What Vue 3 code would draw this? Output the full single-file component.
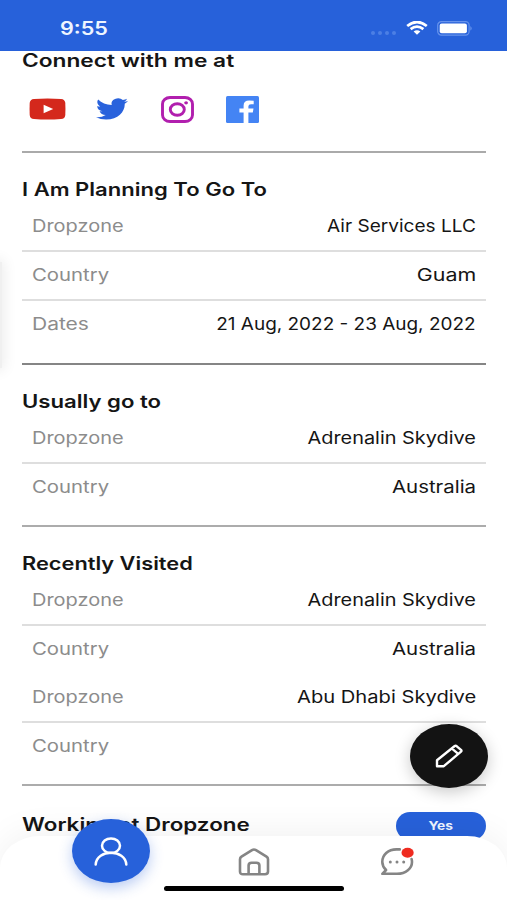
<script setup>
const trips = [
  {
    title: 'I Am Planning To Go To',
    stretch: 1.225,
    rows: [
      { label: 'Dropzone', value: 'Air Services LLC', stretch: 1.12 },
      { label: 'Country', value: 'Guam', stretch: 1.26 },
      { label: 'Dates', value: '21 Aug, 2022 - 23 Aug, 2022', stretch: 1.115 },
    ],
  },
  {
    title: 'Usually go to',
    stretch: 1.23,
    rows: [
      { label: 'Dropzone', value: 'Adrenalin Skydive', stretch: 1.17 },
      { label: 'Country', value: 'Australia', stretch: 1.2 },
    ],
  },
  {
    title: 'Recently Visited',
    stretch: 1.21,
    rows: [
      { label: 'Dropzone', value: 'Adrenalin Skydive', stretch: 1.17 },
      { label: 'Country', value: 'Australia', stretch: 1.2, plain: true },
      { label: 'Dropzone', value: 'Abu Dhabi Skydive', stretch: 1.185 },
      { label: 'Country', value: '', stretch: 1 },
    ],
  },
];

const labelStretch = { Dropzone: 1.175, Country: 1.195, Dates: 1.235 };

const scale = (x) => ({ transform: `scaleX(${x})` });
</script>

<template>
  <div class="screen">
    <header class="status-bar">
      <span class="time">9:55</span>
      <div class="status-icons">
        <span class="dots"><i v-for="n in 4" :key="n"></i></span>
        <svg class="wifi" viewBox="0 0 22 14" preserveAspectRatio="none">
          <path d="M1.2 5 Q11 -3 20.8 5" />
          <path d="M4.6 8.1 Q11 3 17.4 8.1" />
          <path class="wifi-tip" d="M7.6 10.6 Q11 8 14.4 10.6 L11 13.7 Z" />
        </svg>
        <svg class="battery" viewBox="0 0 36 15">
          <rect class="shell" x="0.7" y="0.7" width="31.4" height="13.4" rx="3.6" />
          <rect class="charge" x="2.7" y="2.5" width="27.2" height="9.8" rx="2" />
          <path class="nub" d="M33.5 5 Q35.6 7.4 33.5 9.8 Z" />
        </svg>
      </div>
    </header>

    <main class="content">
      <section class="connect">
        <h2><span class="stretch" :style="scale(1.262)">Connect with me at</span></h2>
        <div class="socials">
          <svg viewBox="0 0 37 34" class="youtube">
            <path fill="#d4281c" d="M5 6.9 Q18.5 5.9 32 6.9 Q36 7.2 36.3 11 Q36.6 17 36.3 23 Q36 26.8 32 27.1 Q18.5 28.1 5 27.1 Q1 26.8 .7 23 Q.4 17 .7 11 Q1 7.2 5 6.9Z" />
            <path fill="#fff" d="M14.6 12.8 L24.2 17 L14.6 21.2Z" />
          </svg>
          <svg viewBox="0 0 24 24" preserveAspectRatio="none" class="twitter">
            <path fill="#2962dc" d="M23.95 4.57a10 10 0 0 1-2.82.77 4.96 4.96 0 0 0 2.16-2.72c-.95.55-2 .95-3.13 1.18a4.92 4.92 0 0 0-8.38 4.48C7.69 8.1 4.07 6.13 1.64 3.16a4.82 4.82 0 0 0-.67 2.48c0 1.71.87 3.21 2.19 4.1a4.9 4.9 0 0 1-2.23-.62v.06a4.92 4.92 0 0 0 3.95 4.83 5 5 0 0 1-2.21.08 4.94 4.94 0 0 0 4.6 3.42A9.87 9.87 0 0 1 0 19.54a13.99 13.99 0 0 0 7.55 2.21c9.05 0 14-7.5 14-13.98 0-.21 0-.42-.02-.63a9.94 9.94 0 0 0 2.46-2.55z" />
          </svg>
          <svg viewBox="0 0 33 27" class="instagram">
            <rect x="1.5" y="1.5" width="30" height="24" rx="7.5" ry="6.5" />
            <ellipse cx="16.3" cy="13.5" rx="7" ry="5.8" />
            <ellipse class="lens" cx="25.1" cy="6.8" rx="1.9" ry="1.6" />
          </svg>
          <svg viewBox="0 0 33 27" class="facebook">
            <rect width="33" height="27" rx="1.5" fill="#4484f4" />
            <path fill="#fff" d="M17.6 27 V16.5 H13.4 V12.5 H17.6 V9.5 Q17.6 4.4 23.3 4.4 Q25.9 4.4 27.7 4.7 V8.3 H25 Q22.4 8.3 22.4 10.2 V12.5 H27.5 L26.8 16.5 H22.4 V27Z" />
          </svg>
        </div>
      </section>

      <section v-for="trip in trips" :key="trip.title" class="trip">
        <h2><span class="stretch" :style="scale(trip.stretch)">{{ trip.title }}</span></h2>
        <div v-for="(row, i) in trip.rows" :key="i" class="row" :class="{ plain: row.plain }">
          <span class="label stretch" :style="scale(labelStretch[row.label])">{{ row.label }}</span>
          <span class="value stretch" :style="scale(row.stretch)">{{ row.value }}</span>
        </div>
      </section>

      <section class="working">
        <h2><span class="stretch" :style="scale(1.245)">Working at Dropzone</span></h2>
        <span class="badge"><span class="badge-text">Yes</span></span>
      </section>
    </main>

    <div class="drawer-edge"></div>

    <button class="edit" aria-label="Edit">
      <svg viewBox="0 0 28 24">
        <path d="M2 22.2 V16.2 L19.4 2.3 Q20.6 1.4 21.8 2.3 L26 5.8 Q27 6.7 26 7.6 L8.8 22.2 Z M17 4.7 L23.2 9.9" />
      </svg>
    </button>

    <nav class="tabs">
      <button class="profile" aria-label="Profile">
        <svg viewBox="0 0 34 29">
          <ellipse cx="17" cy="8.7" rx="9" ry="7.3" />
          <path d="M1.7 27.5 C2.5 11.9 31.5 11.9 32.3 27.5" />
        </svg>
      </button>
      <svg class="home" viewBox="0 0 32 28">
        <path d="M2 11.3 Q2 9.7 3.5 8.7 L14 2.1 Q16 .9 18 2.1 L28.5 8.7 Q30 9.7 30 11.3 V23.6 Q30 26.3 27 26.3 H5 Q2 26.3 2 23.6 Z" />
        <path d="M10.6 26 V17.5 Q10.6 14.7 13.6 14.7 H18.4 Q21.4 14.7 21.4 17.5 V26" />
      </svg>
      <svg class="chat" viewBox="0 0 34 30">
        <path d="M19.8 3.4 H16.5 C8 3.4 2.3 9 2.3 15.9 C2.3 19.2 3.9 21.9 6.1 24 L2.3 27.8 H17 C26 27.8 32 22.2 32 15.9 Q32 14.4 31.6 13.1" />
        <circle cx="10.3" cy="16" r="1.5" />
        <circle cx="17" cy="16" r="1.5" />
        <circle cx="23.7" cy="16" r="1.5" />
        <ellipse class="alert" cx="27.6" cy="6.7" rx="6.1" ry="5" />
      </svg>
      <div class="home-indicator"></div>
    </nav>
  </div>
</template>

<style>
body {
  margin: 0;
}
</style>

<style scoped>
.screen {
  position: relative;
  width: 507px;
  height: 900px;
  overflow: hidden;
  background: #fff;
  color: #151515;
  font-family: Inter, 'Liberation Sans', sans-serif;
}

.status-bar {
  box-sizing: border-box;
  display: flex;
  justify-content: space-between;
  height: 51px;
  padding: 18px 34px 0 60px;
  background: #2761da;
}

.time {
  font-size: 18px;
  font-weight: 600;
  line-height: 22px;
  color: #eef5ff;
  transform: scaleX(1.2);
  transform-origin: left;
}

.status-icons {
  display: flex;
  height: 22px;
}

.dots {
  display: flex;
  gap: 3px;
  padding: 13px 10px 0 0;
}

.dots i {
  width: 4px;
  height: 4px;
  border-radius: 50%;
  background: #4c7fe4;
}

.wifi {
  width: 22px;
  height: 14px;
  margin: 3px 9px 0 0;
  fill: none;
  stroke: #fff;
  stroke-width: 2.7;
}

.wifi .wifi-tip {
  fill: #fff;
  stroke: none;
}

.battery {
  width: 36px;
  height: 15px;
  margin-top: 3px;
}

.shell {
  fill: none;
  stroke: #6793ec;
  stroke-width: 1.2;
}

.charge {
  fill: #fff;
}

.nub {
  fill: #7ba3f2;
}

.content {
  padding: 0 21px 0 22px;
}

h2 {
  margin: 0;
  font-size: 18px;
  font-weight: 600;
  line-height: 24px;
  white-space: nowrap;
}

.stretch {
  display: inline-block;
  transform-origin: left;
}

.connect {
  box-sizing: border-box;
  display: flow-root;
  height: 102px;
  border-bottom: 2px solid #aaa;
}

.connect h2 {
  margin-top: -2px;
}

.socials {
  display: flex;
  align-items: center;
  height: 34px;
  padding: 19px 0 0 7px;
}

.youtube {
  width: 37px;
  height: 34px;
}

.twitter {
  width: 32px;
  height: 26px;
  margin-left: 30px;
}

.instagram {
  width: 33px;
  height: 27px;
  margin-left: 33px;
  fill: none;
  stroke: #b11fae;
  stroke-width: 2.9;
}

.instagram .lens {
  fill: #b11fae;
  stroke: none;
}

.facebook {
  width: 33px;
  height: 27px;
  margin-left: 32px;
}

.trip {
  border-bottom: 2px solid #acacac;
}

.trip:nth-child(2) {
  border-color: #858585;
}

.trip h2 {
  height: 24px;
  padding: 25px 0 1px;
}

.row {
  box-sizing: border-box;
  display: flex;
  justify-content: space-between;
  height: 49px;
  padding: 12px 10px 0;
  border-bottom: 2px solid #dedede;
  font-size: 17px;
  line-height: 22px;
}

.row:last-child {
  height: 61px;
  border-bottom: none;
}

.trip:nth-child(2) .row:last-child {
  height: 62px;
}

.row.plain {
  height: 48px;
  border-bottom: none;
}

.label {
  color: #8c8c8c;
}

.value {
  transform-origin: right;
}

.working {
  display: flex;
  justify-content: space-between;
  padding-top: 26px;
}

.badge {
  display: flex;
  justify-content: center;
  width: 90px;
  height: 28px;
  border-radius: 16px;
  background: #2761da;
  color: #eef5ff;
  font-size: 12px;
  font-weight: 700;
  line-height: 27px;
}

.badge-text {
  transform: scaleX(1.15);
}

.working h2 {
  line-height: 25px;
}

/* edge of the closed side drawer */
.drawer-edge {
  position: absolute;
  top: 262px;
  left: -20px;
  width: 22px;
  height: 106px;
  background: #f0f0f0;
  box-shadow: 0 0 14px 2px rgba(0, 0, 0, 0.08);
}

button {
  display: flex;
  align-items: center;
  justify-content: center;
  padding: 0;
  border: none;
  border-radius: 50%;
}

.edit {
  position: absolute;
  top: 724px;
  left: 410px;
  width: 78px;
  height: 64px;
  background: #131313;
  box-shadow: 0 4px 16px rgba(0, 0, 0, 0.22);
}

.edit svg {
  width: 28px;
  height: 24px;
  fill: none;
  stroke: #fff;
  stroke-width: 2.4;
  stroke-linejoin: round;
}

.tabs {
  position: absolute;
  right: 0;
  bottom: 0;
  left: 0;
  display: flex;
  height: 64px;
  border-radius: 40px 40px 0 0 / 32px 32px 0 0;
  background: #fff;
  box-shadow: 0 -3px 36px rgba(0, 0, 0, 0.06);
}

.profile {
  width: 78px;
  height: 64px;
  margin: -17px 0 0 72px;
  background: #2761da;
  box-shadow: 0 5px 14px rgba(39, 97, 218, 0.32);
}

.profile svg {
  width: 34px;
  height: 29px;
  fill: none;
  stroke: #fff;
  stroke-width: 2.5;
  stroke-linecap: round;
}

.home {
  width: 32px;
  height: 28px;
  margin: 12px 0 0 88px;
  fill: none;
  stroke: #858585;
  stroke-width: 2.6;
}

.chat {
  width: 34px;
  height: 30px;
  margin: 10px 0 0 110px;
  fill: none;
  stroke: #858585;
  stroke-width: 2.6;
  stroke-linecap: round;
  stroke-linejoin: round;
}

.chat circle {
  fill: #858585;
  stroke: none;
}

.chat .alert {
  fill: #ef2b20;
  stroke: none;
}

.home-indicator {
  position: absolute;
  bottom: 9px;
  left: 164px;
  width: 180px;
  height: 5px;
  border-radius: 3px;
  background: #000;
}
</style>
